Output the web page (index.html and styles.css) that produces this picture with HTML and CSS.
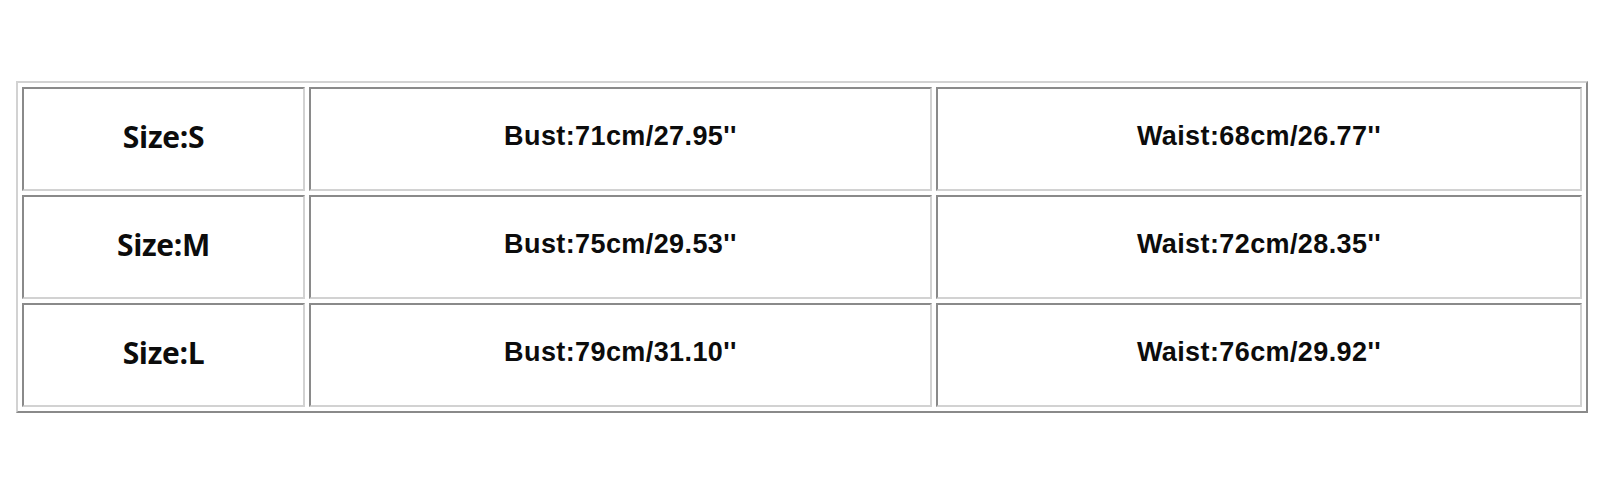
FILE: index.html
```html
<!DOCTYPE html>
<html>
<head>
<meta charset="utf-8">
<link rel="stylesheet" href="styles.css">
</head>
<body>
<div class="page">
  <table class="sizes">
    <colgroup>
      <col class="c1"><col class="c2"><col class="c3">
    </colgroup>
    <tr>
      <td class="size">Size:S</td>
      <td>Bust:71cm/27.95''</td>
      <td>Waist:68cm/26.77''</td>
    </tr>
    <tr>
      <td class="size">Size:M</td>
      <td>Bust:75cm/29.53''</td>
      <td>Waist:72cm/28.35''</td>
    </tr>
    <tr>
      <td class="size">Size:L</td>
      <td>Bust:79cm/31.10''</td>
      <td>Waist:76cm/29.92''</td>
    </tr>
  </table>
</div>
</body>
</html>
```

FILE: styles.css
```css
html, body {
  margin: 0;
  padding: 0;
  background: #ffffff;
}
.page {
  padding: 81px 14px 0 16px;
}
.sizes {
  width: 1570px;
  table-layout: fixed;
  border-collapse: separate;
  border-spacing: 4px;
  border-style: solid;
  border-width: 2px;
  border-color: #d2d2d2 #8a8a8a #8a8a8a #d2d2d2;
  font-family: "Liberation Sans", Arial, sans-serif;
  font-weight: 700;
  font-size: 27px;
  letter-spacing: 0.4px;
  color: #0c0c0c;
}
.c1 { width: 283px; }
.c2 { width: 623px; }
.c3 { width: 646px; }
.sizes td {
  border-style: solid;
  border-width: 2px;
  border-color: #8a8a8a #d2d2d2 #d2d2d2 #8a8a8a;
  text-align: center;
  vertical-align: middle;
  padding: 0 0 6px 0;
  height: 94px;
}
.sizes td.size {
  font-family: "Open Sans", "Noto Sans", sans-serif;
  font-size: 30px;
  letter-spacing: -0.3px;
}
```
